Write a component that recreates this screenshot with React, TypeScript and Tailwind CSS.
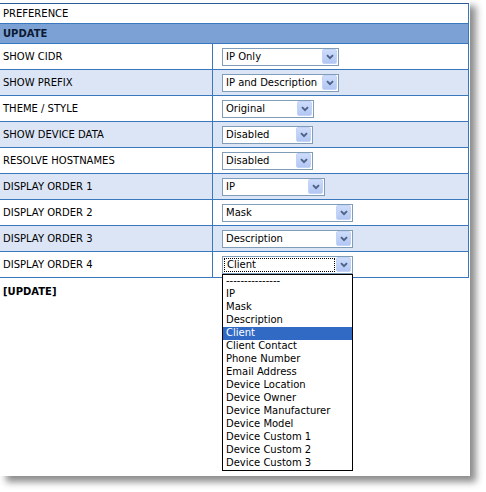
import React from "react";

const rows: { label: string; value: string; width: string; blue: boolean }[] = [
    { label: "SHOW CIDR", value: "IP Only", width: "w-[117px]", blue: false },
    { label: "SHOW PREFIX", value: "IP and Description", width: "w-[117px]", blue: true },
    { label: "THEME / STYLE", value: "Original", width: "w-[92px]", blue: false },
    { label: "SHOW DEVICE DATA", value: "Disabled", width: "w-[91px]", blue: true },
    { label: "RESOLVE HOSTNAMES", value: "Disabled", width: "w-[91px]", blue: false },
    { label: "DISPLAY ORDER 1", value: "IP", width: "w-[103px]", blue: true },
    { label: "DISPLAY ORDER 2", value: "Mask", width: "w-[131px]", blue: false },
    { label: "DISPLAY ORDER 3", value: "Description", width: "w-[131px]", blue: true },
];

const options = [
    "---------------",
    "IP",
    "Mask",
    "Description",
    "Client",
    "Client Contact",
    "Phone Number",
    "Email Address",
    "Device Location",
    "Device Owner",
    "Device Manufacturer",
    "Device Model",
    "Device Custom 1",
    "Device Custom 2",
    "Device Custom 3",
];

function Arrow() {
    return (
        <span className="flex h-[15px] w-[15px] shrink-0 items-center justify-center rounded-[2px] bg-gradient-to-b from-[#cddcfb] to-[#b2c7f3] border border-[#c3d3f8]">
            <svg width="8" height="6" viewBox="0 0 8 6">
                <path d="M1 1.2 L4 4.2 L7 1.2" fill="none" stroke="#4d6185" strokeWidth="1.9" />
            </svg>
        </span>
    );
}

function Select({ value, width, focused }: { value: string; width: string; focused?: boolean }) {
    return (
        <div className={`${width} flex h-[18px] items-center border border-[#7f9db9] bg-white pr-[1px]`}>
            {focused ? (
                <span className="mx-[1px] flex h-[14px] flex-1 items-center border border-dotted border-black pl-[2px]">
                    {value}
                </span>
            ) : (
                <span className="flex-1 pl-[3px]">{value}</span>
            )}
            <Arrow />
        </div>
    );
}

export default function App() {
    return (
        <div
            className="h-[492px] w-[486px] bg-white text-[10px] text-black"
            style={{ fontFamily: '"DejaVu Sans", Verdana, sans-serif' }}
        >
            <div className="h-[476px] w-[470px] bg-white pt-[3px] shadow-[6px_6px_7px_rgba(0,0,0,0.45)]">
                <div className="w-[469px] border-t border-r border-[#3a78bd] border-t-[#2a5c94]">
                    <div className="flex h-[20px] items-center border-b border-[#3a78bd] pl-[3px]">PREFERENCE</div>
                    <div className="flex h-[20px] items-center border-b border-[#3a78bd] bg-[#7ca1d5] pl-[3px] font-bold text-[#0c1a33]">
                        UPDATE
                    </div>
                    {rows.map(r => (
                        <div
                            key={r.label}
                            className={`grid h-[26px] grid-cols-[212px_1fr] border-b border-[#3a78bd] ${r.blue ? "bg-[#dbe5f5]" : "bg-white"}`}
                        >
                            <div className="flex items-center pl-[3px]">{r.label}</div>
                            <div className="flex items-center border-l border-[#3a78bd] pl-[9px]">
                                <Select value={r.value} width={r.width} />
                            </div>
                        </div>
                    ))}
                    <div className="grid h-[26px] grid-cols-[212px_1fr] border-b border-[#3a78bd] bg-white">
                        <div className="flex items-center pl-[3px]">DISPLAY ORDER 4</div>
                        <div className="flex items-center border-l border-[#3a78bd] pl-[9px]">
                            <div className="relative">
                                <Select value="Client" width="w-[131px]" focused />
                                <ul className="absolute left-0 top-[18px] z-10 w-[131px] border border-black bg-white">
                                    {options.map(o => (
                                        <li
                                            key={o}
                                            className={`flex h-[13px] items-center pl-[3px] leading-none ${o === "Client" ? "bg-[#316ac5] text-white" : ""}`}
                                        >
                                            {o}
                                        </li>
                                    ))}
                                </ul>
                            </div>
                        </div>
                    </div>
                </div>
                <div className="pl-[3px] pt-[6px] font-bold">[UPDATE]</div>
            </div>
        </div>
    );
}
